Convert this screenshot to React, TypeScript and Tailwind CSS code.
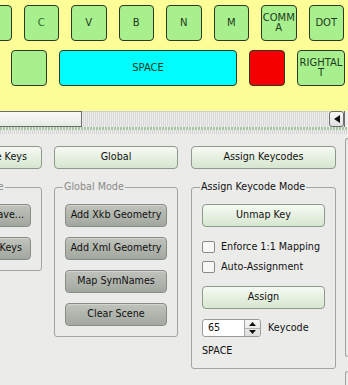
import React from "react";

const keyCls =
  "flex items-center justify-center text-center rounded-[4px] border-[1.5px] border-[#2b3a20] text-[10px] leading-[10px] text-[#1f3a1f]";
const greenKey = keyCls + " bg-[#a8f08e]";

const lightBtn =
  "h-[23px] flex items-center justify-center rounded-[4px] border border-[#8d998a] bg-gradient-to-b from-[#f6faf3] to-[#d6e6cf] text-[9.6px] text-[#111]";
const grayBtn =
  "h-[23px] flex items-center justify-center rounded-[4px] border border-[#878d84] bg-gradient-to-b from-[#bfc3bb] to-[#a2a79f] text-[9.6px] text-[#111] shadow-[inset_0_1px_0_#d0d4cc]";

function Check({ label }: { label: string }) {
  return (
    <div className="flex items-center h-[14px] gap-[6px]">
      <div className="w-[13px] h-[12px] rounded-[2px] border border-[#8a8a8a] bg-[#f7f7f5]" />
      <span className="text-[9.6px] text-[#111] leading-[12px]">{label}</span>
    </div>
  );
}

export default function App() {
  return (
    <div className="w-[348px] h-[385px] overflow-hidden bg-[#ebebe9] font-['DejaVu_Sans',sans-serif]">
      {/* keyboard area */}
      <div className="h-[111px] bg-[#fdfd97] pt-[5px] overflow-hidden">
        <div className="flex gap-[12px] ml-[-24px] h-[36px]">
          <div className={greenKey + " w-[35.5px] shrink-0"} />
          <div className={greenKey + " w-[35.5px] shrink-0 text-[#2c6a2c]"}>C</div>
          <div className={greenKey + " w-[35.5px] shrink-0"}>V</div>
          <div className={greenKey + " w-[35.5px] shrink-0"}>B</div>
          <div className={greenKey + " w-[35.5px] shrink-0"}>N</div>
          <div className={greenKey + " w-[35.5px] shrink-0"}>M</div>
          <div className={greenKey + " w-[35.5px] shrink-0"}>
            COMM
            <br />A
          </div>
          <div className={greenKey + " w-[35.5px] shrink-0"}>DOT</div>
        </div>
        <div className="flex gap-[12px] ml-[11px] mt-[9px] h-[36px]">
          <div className={greenKey + " w-[36px] shrink-0"} />
          <div className={keyCls + " w-[178px] shrink-0 bg-[#00fcfc] text-[#1a4a5a]"}>SPACE</div>
          <div className={keyCls + " w-[36px] shrink-0 bg-[#f50000]"} />
          <div className={greenKey + " w-[48px] shrink-0"}>
            RIGHTAL
            <br />T
          </div>
        </div>
      </div>

      {/* scrollbar */}
      <div className="h-[16px] flex bg-[#e2e2e0]">
        <div className="w-[82px] h-full border border-l-0 border-[#6c6c6c] bg-gradient-to-b from-[#fbfbfa] to-[#e6ebe4]" />
        <div className="flex-1 h-full border-t border-[#d0d0d0] bg-[repeating-linear-gradient(90deg,#ececea_0px,#ececea_1px,#d9d9d7_1px,#d9d9d7_2px)]" />
        <div className="w-[15px] h-full rounded-[3px] border border-[#6c6c6c] bg-gradient-to-b from-[#fafafa] to-[#e0e0de] flex items-center justify-center">
          <svg width="6" height="8" viewBox="0 0 6 8">
            <polygon points="6,0 6,8 0,4" fill="#111" />
          </svg>
        </div>
        <div className="w-[4px] h-full border-l border-[#6c6c6c] bg-[#f0f0f0]" />
      </div>
      <div className="h-[3px] bg-[repeating-linear-gradient(90deg,#a9c4a6_0px,#a9c4a6_2px,#e8f0e6_2px,#e8f0e6_3px)]" />
      <div className="h-[4px] bg-[repeating-linear-gradient(90deg,#d2d2d0_0px,#d2d2d0_1px,#f0f0ee_1px,#f0f0ee_2px)]" />

      {/* panel */}
      <div className="flex items-start pt-[12px]">
        {/* left (clipped) column */}
        <div className="ml-[-60px] w-[102px] shrink-0 flex flex-col">
          <div className={lightBtn + " !justify-end pr-[14px]"}>Move Keys</div>
          <fieldset className="mt-[12px] border border-[#a3a3a1] rounded-[3px] p-0 m-0">
            <legend className="ml-[14px] px-[1px] text-[9.6px] leading-[12px] text-[#8a8a88]">Edit Mode</legend>
            <div className="flex flex-col gap-[10px] pt-[11px] pb-[10px] pr-[10px] pl-[20px]">
              <div className={grayBtn + " !justify-end pr-[6px]"}>Save...</div>
              <div className={grayBtn + " !justify-end pr-[8px]"}>Load Keys</div>
            </div>
          </fieldset>
        </div>

        {/* middle column */}
        <div className="ml-[12px] w-[124px] shrink-0 flex flex-col">
          <div className={lightBtn}>Global</div>
          <fieldset className="mt-[12px] border border-[#a3a3a1] rounded-[3px] p-0 m-0">
            <legend className="ml-[8px] px-[1px] text-[9.6px] leading-[12px] text-[#8a8a88]">Global Mode</legend>
            <div className="flex flex-col gap-[10px] pt-[11px] pb-[10px] px-[10px]">
              <div className={grayBtn}>Add Xkb Geometry</div>
              <div className={grayBtn}>Add Xml Geometry</div>
              <div className={grayBtn}>Map SymNames</div>
              <div className={grayBtn}>Clear Scene</div>
            </div>
          </fieldset>
        </div>

        {/* right column */}
        <div className="ml-[13px] w-[145px] shrink-0 flex flex-col">
          <div className={lightBtn}>Assign Keycodes</div>
          <fieldset className="mt-[12px] border border-[#a3a3a1] rounded-[3px] p-0 m-0">
            <legend className="ml-[8px] px-[1px] text-[9.6px] leading-[12px] text-[#111]">Assign Keycode Mode</legend>
            <div className="flex flex-col pt-[11px] pb-[11px] px-[10px]">
              <div className={lightBtn}>Unmap Key</div>
              <div className="mt-[13px]">
                <Check label="Enforce 1:1 Mapping" />
              </div>
              <div className="mt-[6px]">
                <Check label="Auto-Assignment" />
              </div>
              <div className={lightBtn + " mt-[12px]"}>Assign</div>
              <div className="mt-[10px] flex items-center h-[18px]">
                <div className="w-[59px] h-[18px] flex rounded-[3px] border border-[#9a9a98] bg-white overflow-hidden">
                  <div className="flex-1 flex items-center pl-[5px] text-[9.6px] text-[#111]">65</div>
                  <div className="w-[16px] flex flex-col border-l border-[#a8a8a6] bg-gradient-to-b from-[#f6f6f4] to-[#dededc]">
                    <div className="flex-1 flex items-center justify-center border-b border-[#b0b0ae]">
                      <svg width="7" height="4" viewBox="0 0 7 4">
                        <polygon points="0,4 7,4 3.5,0" fill="#111" />
                      </svg>
                    </div>
                    <div className="flex-1 flex items-center justify-center">
                      <svg width="7" height="4" viewBox="0 0 7 4">
                        <polygon points="0,0 7,0 3.5,4" fill="#111" />
                      </svg>
                    </div>
                  </div>
                </div>
                <span className="ml-[7px] text-[9.6px] text-[#111]">Keycode</span>
              </div>
              <div className="mt-[8px] h-[12px] flex items-center text-[9.6px] text-[#111]">SPACE</div>
            </div>
          </fieldset>
        </div>

        {/* partial right panel */}
        <div className="ml-[9px] flex-1 mt-[-8px] flex flex-col">
          <div className="h-[219px] border-l border-t border-b border-[#a3a3a1] rounded-l-[3px]" />
          <div className="mt-[14px] h-[30px] border-l border-t border-[#a3a3a1] rounded-tl-[3px]" />
        </div>
      </div>
    </div>
  );
}
